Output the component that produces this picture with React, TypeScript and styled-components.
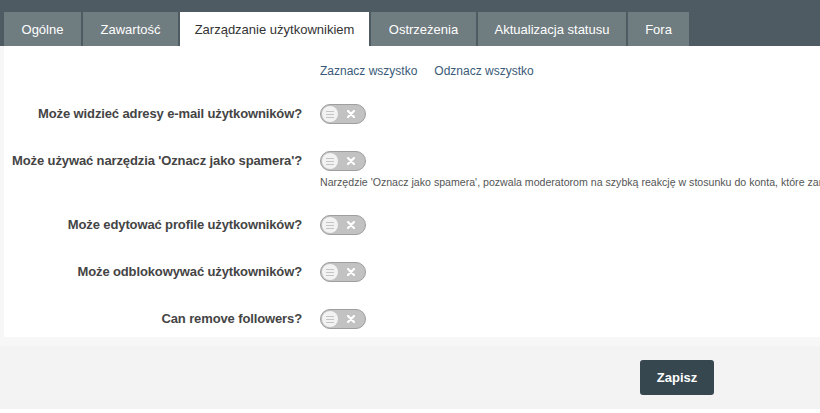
import styled, { createGlobalStyle } from "styled-components";

const GlobalStyle = createGlobalStyle`
  html, body {
    margin: 0;
    padding: 0;
    background: #fff;
    font-family: "Liberation Sans", Arial, sans-serif;
    overflow: hidden;
  }
`;

const tabs = [
  { title: "Ogólne", width: 77 },
  { title: "Zawartość", width: 95 },
  { title: "Zarządzanie użytkownikiem", width: 189 },
  { title: "Ostrzeżenia", width: 105 },
  { title: "Aktualizacja statusu", width: 148 },
  { title: "Fora", width: 61 },
];

interface Setting {
  label: string;
  help?: string;
}

const settings: Setting[] = [
  { label: "Może widzieć adresy e-mail użytkowników?" },
  {
    label: "Może używać narzędzia 'Oznacz jako spamera'?",
    help: "Narzędzie 'Oznacz jako spamera', pozwala moderatorom na szybką reakcję w stosunku do konta, które zamieszcza spam na forum.",
  },
  { label: "Może edytować profile użytkowników?" },
  { label: "Może odblokowywać użytkowników?" },
  { label: "Can remove followers?" },
];

function Toggle() {
  return (
    <ToggleTrack>
      <Knob>
        <svg width="8" height="7" viewBox="0 0 8 7">
          <path d="M0 0.5h8M0 3.5h8M0 6.5h8" stroke="#c4c4c4" strokeWidth="1" />
        </svg>
      </Knob>
      <svg width="8" height="8" viewBox="0 0 8 8">
        <path d="M1 1L7 7M7 1L1 7" stroke="#fff" strokeWidth="2.2" strokeLinecap="round" />
      </svg>
    </ToggleTrack>
  );
}

export default function App() {
  return (
    <>
      <GlobalStyle />
      <TabBar>
        {tabs.map((t, i) => (
          <Tab key={t.title} $active={i === 2} $width={t.width}>
            {t.title}
          </Tab>
        ))}
      </TabBar>
      <Body>
        <Panel>
          <Links>
            <LinkText>Zaznacz wszystko</LinkText>
            <LinkText>Odznacz wszystko</LinkText>
          </Links>
          {settings.map((s) => (
            <Row key={s.label}>
              <Label>{s.label}</Label>
              <Control>
                <Toggle />
                {s.help && <Help>{s.help}</Help>}
              </Control>
            </Row>
          ))}
        </Panel>
        <Footer>
          <SaveButton>Zapisz</SaveButton>
        </Footer>
      </Body>
    </>
  );
}

const TabBar = styled.div`
  display: flex;
  gap: 2px;
  background: #4f5b62;
  padding: 12px 0 0 4px;
  height: 34px;
`;

const Tab = styled.div<{ $active?: boolean; $width: number }>`
  display: flex;
  align-items: center;
  justify-content: center;
  width: ${(p) => p.$width}px;
  font-size: 13px;
  color: ${(p) => (p.$active ? "#333" : "#fff")};
  background: ${(p) => (p.$active ? "#fff" : "#6f7c80")};
  white-space: nowrap;
`;

const Body = styled.div`
  background: #f7f7f7;
  padding-bottom: 0;
`;

const Panel = styled.div`
  background: #fff;
  margin-left: 4px;
  padding: 18px 0 8px;
  white-space: nowrap;
`;

const Links = styled.div`
  display: flex;
  gap: 17px;
  padding-left: 316px;
  margin-bottom: 26px;
`;

const LinkText = styled.span`
  font-size: 12px;
  color: #3a5a78;
`;

const Row = styled.div`
  display: grid;
  grid-template-columns: 298px auto;
  column-gap: 18px;
  align-items: start;
  margin-bottom: 27px;

  &:last-child {
    margin-bottom: 0;
  }
`;

const Label = styled.div`
  text-align: right;
  font-size: 13px;
  font-weight: bold;
  letter-spacing: -0.12px;
  color: #444;
  line-height: 20px;
`;

const Control = styled.div`
  display: flex;
  flex-direction: column;
  gap: 5px;
`;

const ToggleTrack = styled.div`
  display: flex;
  align-items: center;
  justify-content: space-between;
  box-sizing: border-box;
  width: 46px;
  height: 20px;
  padding: 0 10px 0 1px;
  border-radius: 10px;
  background: #c2c2c2;
  border: 1px solid #9e9e9e;
`;

const Knob = styled.div`
  display: flex;
  align-items: center;
  justify-content: center;
  width: 16px;
  height: 16px;
  border-radius: 50%;
  background: #f2f2f2;
`;

const Help = styled.div`
  font-size: 10.6px;
  color: #555;
`;

const Footer = styled.div`
  display: flex;
  margin-top: 9px;
  padding: 14px 0 14px 640px;
  background: #f3f3f3;
`;

const SaveButton = styled.button`
  width: 74px;
  height: 35px;
  border: none;
  border-radius: 3px;
  background: #36474f;
  color: #fff;
  font-family: "Liberation Sans", Arial, sans-serif;
  font-size: 13px;
  font-weight: bold;
`;
